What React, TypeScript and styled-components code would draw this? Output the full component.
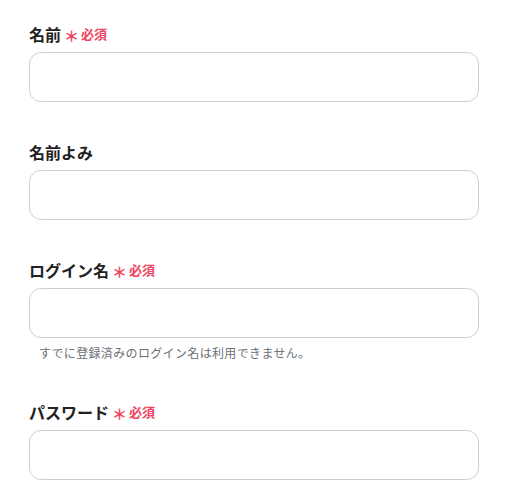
import React from "react";
import styled, { createGlobalStyle } from "styled-components";

const Global = createGlobalStyle`
  html, body { margin: 0; padding: 0; background: #ffffff; }
  body { font-family: "Noto Sans CJK JP", "Noto Sans", sans-serif; color: #222; }
  * { box-sizing: border-box; }
`;

const Form = styled.form`
  display: flex;
  flex-direction: column;
  gap: 38px;
  padding: 22px 35px 0 29px;
  width: 514px;
`;

const Field = styled.div`
  display: flex;
  flex-direction: column;
`;

const Label = styled.label`
  display: flex;
  align-items: center;
  height: 24px;
  margin-bottom: 6px;
  font-size: 16px;
  font-weight: 700;
  color: #222222;
  line-height: 24px;
`;

const Required = styled.span`
  display: inline-flex;
  align-items: center;
  margin-left: 3px;
  color: #f0445e;
  font-size: 13px;
  font-weight: 700;
`;

const Star = styled.span`
  font-size: 15px;
  font-weight: 700;
  line-height: 1;
  margin-right: 2px;
  position: relative;
  top: 1px;
`;

const Input = styled.input`
  width: 450px;
  height: 50px;
  border: 1px solid #ccd0d6;
  border-radius: 12px;
  background: #fff;
  padding: 0 14px;
  font-size: 16px;
  font-family: inherit;
  outline: none;
`;

const Help = styled.p`
  margin: 5px 0 0 10px;
  font-size: 12px;
  letter-spacing: 0.35px;
  line-height: 19px;
  color: #6b6f76;
`;

type FieldDef = { label: string; required?: boolean; help?: string; type?: string };

const fields: FieldDef[] = [
  { label: "名前", required: true },
  { label: "名前よみ" },
  { label: "ログイン名", required: true, help: "すでに登録済みのログイン名は利用できません。" },
  { label: "パスワード", required: true, type: "password" },
];

export default function App() {
  return (
    <>
      <Global />
      <Form onSubmit={(e) => e.preventDefault()}>
        {fields.map((f) => (
          <Field key={f.label}>
            <Label>
              {f.label}
              {f.required && (
                <Required>
                  <Star>＊</Star>必須
                </Required>
              )}
            </Label>
            <Input type={f.type ?? "text"} />
            {f.help && <Help>{f.help}</Help>}
          </Field>
        ))}
      </Form>
    </>
  );
}
